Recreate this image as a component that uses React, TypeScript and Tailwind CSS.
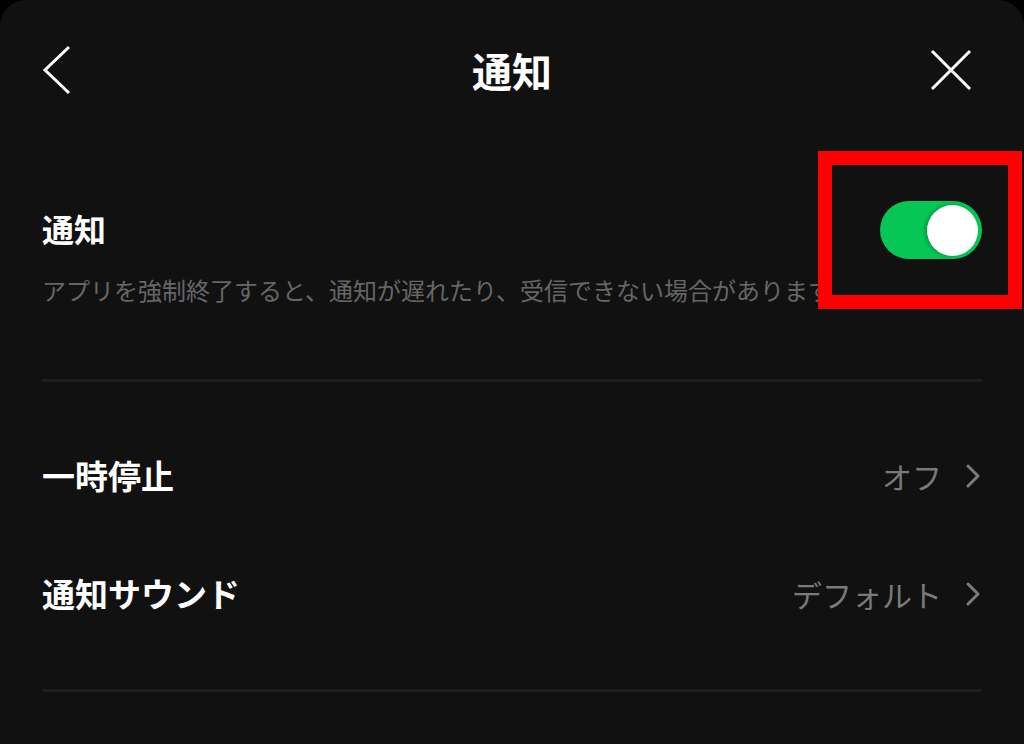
import React from 'react';

const font = { fontFamily: '"Noto Sans CJK JP", "Noto Sans", sans-serif' };

function Chevron() {
  return (
    <svg width="18" height="26" viewBox="0 0 18 26" fill="none">
      <path d="M4 3l10 10-10 10" stroke="#7a7a7a" strokeWidth="3" strokeLinecap="round" strokeLinejoin="round" />
    </svg>
  );
}

function Row({ label, value }: { label: string; value: string }) {
  return (
    <div className="flex items-center justify-between h-[118px]">
      <span className="text-[33px] font-bold text-white">{label}</span>
      <div className="flex items-center gap-[22px] text-[30px] text-[#7a7a7a]">
        <span>{value}</span>
        <Chevron />
      </div>
    </div>
  );
}

export default function App() {
  return (
    <div className="w-[1024px] h-[744px] bg-black overflow-hidden" style={font}>
      <div className="relative h-full bg-[#111111] rounded-t-[26px] px-[42px]">
        <div className="grid grid-cols-[1fr_auto_1fr] items-center h-[146px] pb-[6px]">
          <svg width="32" height="50" viewBox="0 0 32 50" fill="none" className="-ml-[1px]">
            <path d="M28 2L4 25l24 23" stroke="#fff" strokeWidth="3" />
          </svg>
          <h1 className="text-[40px] font-bold text-white">通知</h1>
          <svg width="42" height="42" viewBox="0 0 42 42" fill="none" className="justify-self-end mr-[10px]">
            <path d="M2 2l38 38M40 2L2 40" stroke="#fff" strokeWidth="3" />
          </svg>
        </div>

        <div className="pt-[60px] pb-[71px]">
          <div className="text-[32px] font-bold text-white leading-[44px]">通知</div>
          <div className="mt-[22px] text-[24px] text-[#666666] whitespace-nowrap leading-[36px]">
            アプリを強制終了すると、通知が遅れたり、受信できない場合があります。
          </div>
        </div>

        <div className="h-[3px] bg-[#1e1e1e]" />

        <div className="pt-[35px] pb-[36px]">
          <Row label="一時停止" value="オフ" />
          <Row label="通知サウンド" value="デフォルト" />
        </div>

        <div className="h-[3px] bg-[#1e1e1e]" />

        <div className="absolute left-[818px] top-[151px] w-[204px] h-[158px] border-[14px] border-[#ff0000] bg-[#111111] flex items-center justify-center">
          <div className="w-[102px] h-[58px] rounded-full bg-[#06c755] flex items-center justify-end pr-[4px] ml-[22px]">
            <div className="w-[51px] h-[51px] rounded-full bg-white shadow-[-2px_0_4px_rgba(0,0,0,0.25)]" />
          </div>
        </div>
      </div>
    </div>
  );
}
